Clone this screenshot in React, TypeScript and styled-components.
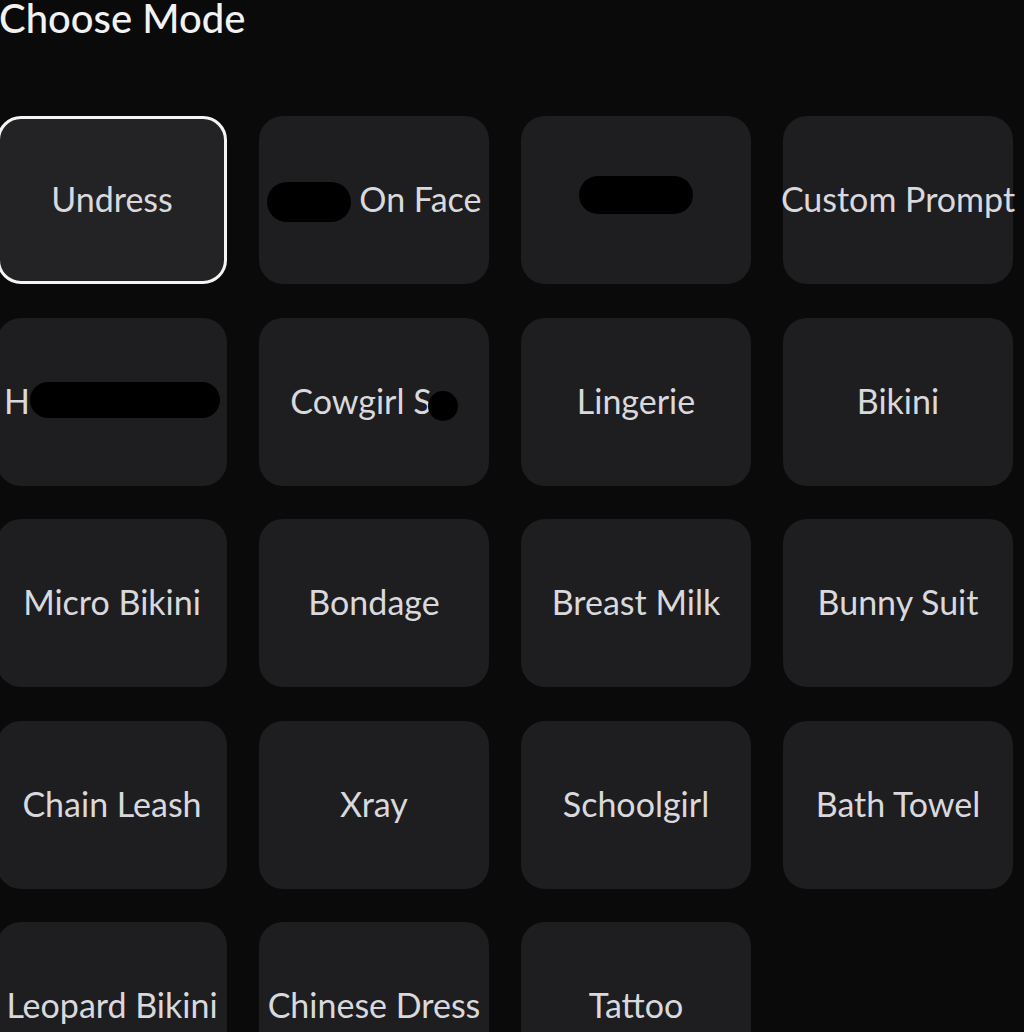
import { FC } from 'react';
import styled, { createGlobalStyle } from 'styled-components';

const GlobalStyle = createGlobalStyle`
  html, body {
    margin: 0;
    padding: 0;
    background: #0a0a0b;
    overflow: hidden;
  }
  body {
    font-family: Lato, 'Noto Sans', sans-serif;
  }
`;

const PageWrapper = styled.div`
  width: 1024px;
  height: 1032px;
  overflow: hidden;
  background: #0a0a0b;
`;

const Title = styled.h2`
  margin: -6px 0 0 -1px;
  font-size: 40px;
  line-height: 48px;
  font-weight: 500;
  color: #f2f2f2;
`;

const ModeGrid = styled.div`
  display: grid;
  grid-template-columns: repeat(4, 230px);
  grid-auto-rows: 168px;
  column-gap: 32px;
  row-gap: 33.5px;
  margin: 74px 0 0 -3px;
`;

const ModeCard = styled.button<{ $active?: boolean }>`
  display: flex;
  align-items: center;
  justify-content: center;
  box-sizing: border-box;
  padding: 0 0 3px;
  background: ${(p) => (p.$active ? '#232326' : '#1e1e21')};
  border: 3px solid ${(p) => (p.$active ? '#f4f4f4' : 'transparent')};
  border-radius: 24px;
  font-family: inherit;
  font-size: 34px;
  color: #d9d9dd;
  white-space: nowrap;
  overflow: visible;
  cursor: pointer;
`;

const Label = styled.span`
  display: inline-flex;
  align-items: center;
`;

const Redact = styled.span<{ $w: number; $h: number; $dx?: number; $dy?: number }>`
  display: inline-block;
  width: ${(p) => p.$w}px;
  height: ${(p) => p.$h}px;
  margin-left: ${(p) => p.$dx ?? 0}px;
  transform: translateY(${(p) => p.$dy ?? 0}px);
  background: #000;
  border-radius: 999px;
`;

type Mode = { key: string; content: React.ReactNode };

const modes: Mode[] = [
  { key: 'undress', content: 'Undress' },
  {
    key: 'face',
    content: (
      <Label>
        <Redact $w={84} $h={40} $dy={3} />
        &nbsp;On Face
      </Label>
    ),
  },
  { key: 'hidden', content: <Redact $w={114} $h={38} $dy={-4} /> },
  { key: 'custom', content: 'Custom Prompt' },
  {
    key: 'h',
    content: (
      <Label>
        H<Redact $w={190} $h={36} $dx={0} />
      </Label>
    ),
  },
  {
    key: 'cowgirl',
    content: (
      <Label>
        Cowgirl S<Redact $w={30} $h={30} $dx={-4} $dy={6} />
      </Label>
    ),
  },
  { key: 'lingerie', content: 'Lingerie' },
  { key: 'bikini', content: 'Bikini' },
  { key: 'micro', content: 'Micro Bikini' },
  { key: 'bondage', content: 'Bondage' },
  { key: 'milk', content: 'Breast Milk' },
  { key: 'bunny', content: 'Bunny Suit' },
  { key: 'chain', content: 'Chain Leash' },
  { key: 'xray', content: 'Xray' },
  { key: 'school', content: 'Schoolgirl' },
  { key: 'towel', content: 'Bath Towel' },
  { key: 'leopard', content: 'Leopard Bikini' },
  { key: 'chinese', content: 'Chinese Dress' },
  { key: 'tattoo', content: 'Tattoo' },
];

const App: FC = () => {
  return (
    <PageWrapper>
      <GlobalStyle />
      <Title>Choose Mode</Title>
      <ModeGrid>
        {modes.map((m, i) => (
          <ModeCard key={m.key} $active={i === 0}>
            {m.content}
          </ModeCard>
        ))}
      </ModeGrid>
    </PageWrapper>
  );
};

export default App;
